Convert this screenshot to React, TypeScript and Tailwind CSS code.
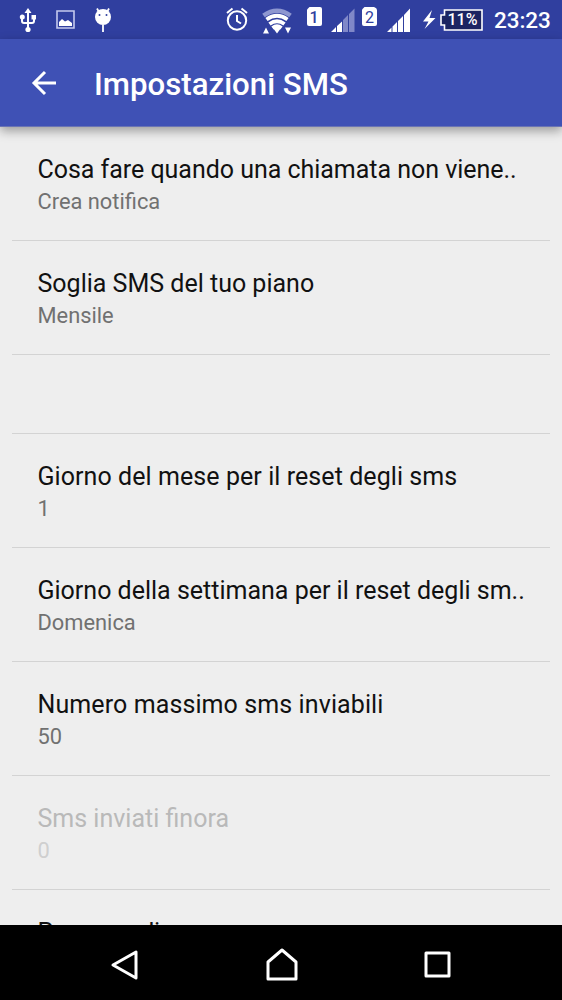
type Setting = {
  title: string;
  summary: string;
  disabled?: boolean;
  tracking?: string;
};

const settings: Setting[] = [
  { title: "Cosa fare quando una chiamata non viene..", summary: "Crea notifica", tracking: "tracking-[-0.03px]" },
  { title: "Soglia SMS del tuo piano", summary: "Mensile" },
  { title: "", summary: "" },
  { title: "Giorno del mese per il reset degli sms", summary: "1", tracking: "tracking-[0.07px]" },
  { title: "Giorno della settimana per il reset degli sm..", summary: "Domenica" },
  { title: "Numero massimo sms inviabili", summary: "50", tracking: "tracking-[0.1px]" },
  { title: "Sms inviati finora", summary: "0", disabled: true },
  { title: "Percorso di", summary: "", tracking: "tracking-[-0.4px]" },
];

function StatusIcons() {
  return (
    <svg width="490" height="39" viewBox="0 0 490 39" fill="none" className="shrink-0">
      {/* USB */}
      <g stroke="#fff" strokeWidth="2">
        <path d="M28 12v17M22 17v4q0 2 2 2h8q2 0 2-2v-4" />
      </g>
      <path d="M28 8l3.500 5h-7z" fill="#fff" />
      <circle cx="28" cy="29.5" r="2.6" fill="#fff" />
      <circle cx="22.300" cy="17" r="2.500" fill="#fff" />
      <path d="M31.500 15H36v4.500h-4.500z" fill="#fff" />

      {/* Picture */}
      <path d="M57 11h17v17H57z" stroke="#c5caee" strokeWidth="1.6" />
      <path d="M59 26v-4l3-3 3 2.500 3-1.500 4 3v3z" fill="#fff" />

      {/* Android head */}
      <path d="M99 12l-2-3.500M107 12l2-3.500M103 25v7" stroke="#fff" strokeWidth="1.800" />
      <circle cx="103" cy="17" r="8" fill="#fff" />
      <circle cx="99.500" cy="15" r="1" fill="#303f9f" />
      <circle cx="106.500" cy="15" r="1" fill="#303f9f" />

      {/* Alarm */}
      <g stroke="#fff" strokeWidth="2">
        <circle cx="237" cy="20.500" r="9.200" />
        <path d="M237 15v6l4 2.500M227 13l5.500-4.500M247 13l-5.500-4.500" strokeWidth="2" />
      </g>

      {/* Wi-Fi */}
      <g strokeWidth="3.800">
        <path d="M263.500 15.500q13.500-9.500 27 0" stroke="#8e97d0" strokeWidth="4.500" />
        <path d="M266.500 19.500q10.500-7.500 21 0" stroke="#fff" />
        <path d="M269.500 24q7.500-5.500 15 0" stroke="#fff" />
        <path d="M272.500 28q4.500-3.500 9 0" stroke="#fff" />
      </g>
      <path d="M273 28h8l-4 5.500zM263 33.500l3-6 3 6zM285 27.500h6l-3 6z" fill="#fff" />

      {/* SIM 1 and its signal */}
      <path d="M309.500 7H320q2 0 2 2v15q0 2-2 2h-11q-2 0-2-2V9.500z" fill="#fff" />
      <text x="314" y="22.500" textAnchor="middle" fontSize="16" fontWeight="500" fill="#303f9f" className="font-['Roboto']">1</text>
      <path d="M331 32l5-5v5zM337 26l5-4.500V32h-5z" fill="#fff" />
      <path d="M343 20l5-5v17h-5zM349 14l5.500-5.500V32H349z" fill="#8088c8" />

      {/* SIM 2 and its signal */}
      <path d="M364.500 7H374q3 1 3 3v14q0 2-2 2h-11q-2 0-2-2V9.500z" fill="#fff" />
      <text x="369.500" y="22.500" textAnchor="middle" fontSize="16" fill="#303f9f" className="font-['Roboto']">2</text>
      <path d="M387 32l4.500-4.500V32zM392.500 26.500l4.500-4.500v10h-4.500zM398 21l5-5v16h-5zM404 15l6-6.500V32h-6z" fill="#fff" />

      {/* Battery */}
      <path d="M432 10l-9 11.500h5.500l-4 7.500 11-11h-6z" fill="#fff" />
      <path d="M444.500 10H482v20H444.500v-5H441v-10h3.500z" fill="#1c2562" stroke="#fff" strokeWidth="1.600" />
      <text x="462.500" y="25" textAnchor="middle" fontSize="16" fontWeight="500" fill="#fff" className="font-['Roboto']">11%</text>
    </svg>
  );
}

function SettingRow({ title, summary, disabled, tracking }: Setting) {
  if (!title) {
    return <li className="mx-3 h-[79px] shrink-0 border-b border-[#d3d3d3]" />;
  }

  return (
    <li className="mx-3 h-[114px] shrink-0 border-b border-[#d3d3d3] px-[25.500px] pt-[27px] whitespace-nowrap">
      <p className={`text-[25px] leading-[32px] ${tracking ?? ""} ${disabled ? "text-[#b9b9b9]" : "text-[#111]"}`}>
        {title}
      </p>
      <p className={`text-[21.850px] leading-[31px] ${disabled ? "text-[#cfcfcf]" : "text-[#717171]"}`}>
        {summary}
      </p>
    </li>
  );
}

export default function App() {
  return (
    <div className="flex h-[1000px] w-[562px] flex-col overflow-hidden bg-[#eee] font-['Roboto',sans-serif]">
      {/* Status bar */}
      <div className="flex h-[39px] shrink-0 items-center bg-[#303f9f] text-white">
        <StatusIcons />
        <span className="pt-0.5 pl-1 text-[22.500px] leading-[37px] font-medium tracking-[-0.1px]">23:23</span>
      </div>

      {/* Toolbar */}
      <header className="z-10 flex h-[88px] shrink-0 items-center border-b border-[#6a74b4] bg-[#3f51b5] pl-[31px] text-white shadow-[0_4px_10px_rgba(0,0,0,0.35)]">
        <svg width="26" height="26" viewBox="0 0 26 26" fill="none" stroke="#fff" strokeWidth="3">
          <path d="M25 13H3M14 2L3 13l11 11" />
        </svg>
        <h1 className="pt-1 pl-[37px] text-[31.200px] leading-[40px] font-medium">Impostazioni SMS</h1>
      </header>

      <ul className="flex min-h-0 flex-1 flex-col overflow-hidden">
        {settings.map((setting, i) => (
          <SettingRow key={i} {...setting} />
        ))}
      </ul>

      {/* Navigation bar */}
      <nav className="flex h-[75px] shrink-0 items-center justify-between bg-black pt-1 pr-[108px] pl-[109px]">
        <svg width="32" height="34" viewBox="0 0 32 34" fill="none" stroke="#fff" strokeWidth="3" strokeLinejoin="round">
          <path d="M27 4v26L4 17z" />
        </svg>
        <svg width="34" height="34" viewBox="0 0 34 34" fill="none" stroke="#fff" strokeWidth="3" strokeLinejoin="round">
          <path d="M3 14L17 2l14 12v17H3z" />
        </svg>
        <svg width="32" height="32" viewBox="0 0 32 32" fill="none" stroke="#fff" strokeWidth="3" strokeLinejoin="round">
          <path d="M4 4h23v23H4z" />
        </svg>
      </nav>
    </div>
  );
}
